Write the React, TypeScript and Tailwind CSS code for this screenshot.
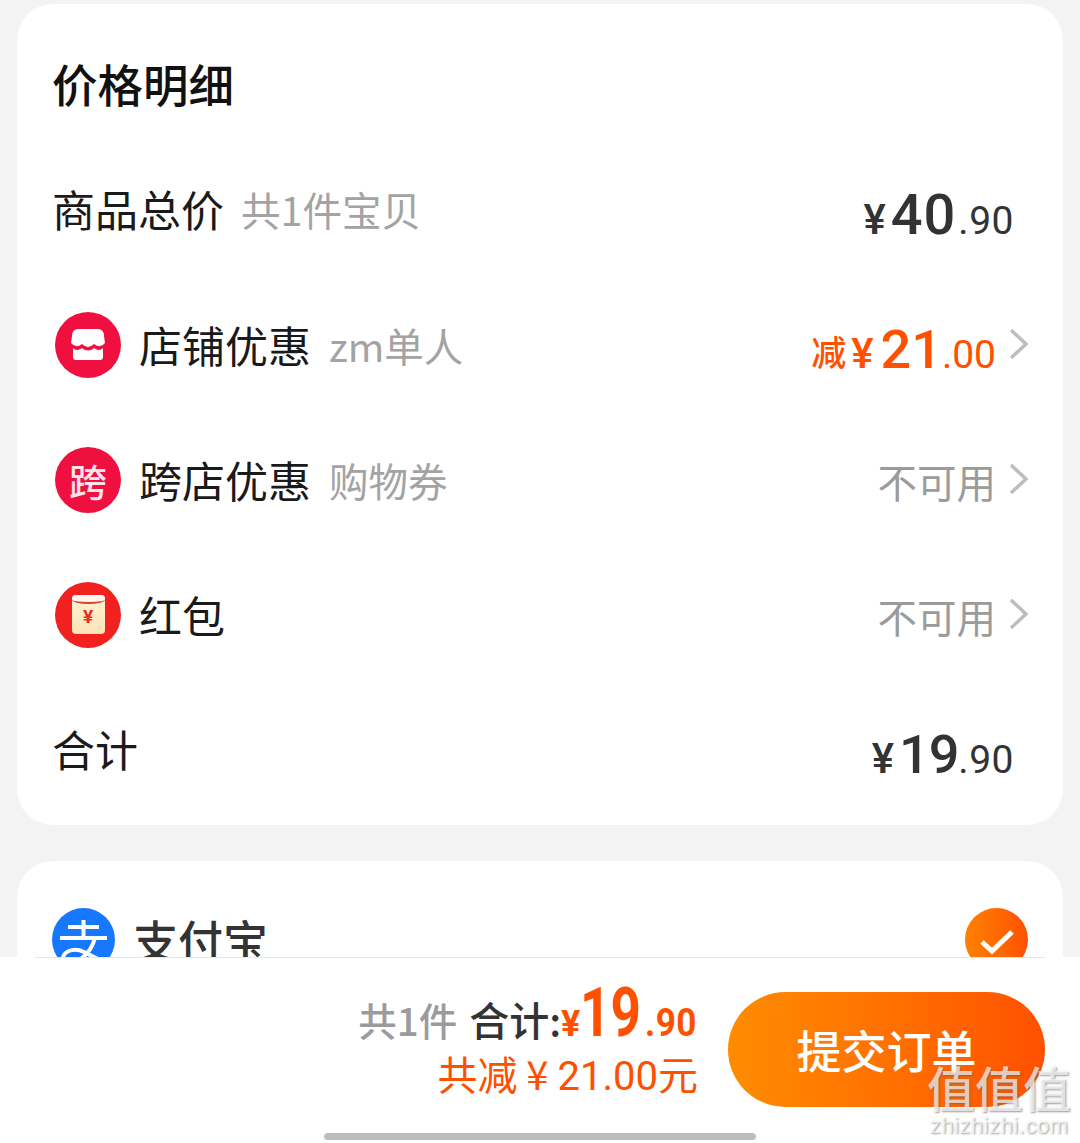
const cjk = "font-['Noto_Sans_CJK_SC','Noto_Sans',sans-serif]";

function Chevron() {
  return (
    <svg className="ml-[13px] -mt-[1px]" width="19" height="32" viewBox="0 0 19 32" fill="none" stroke="#bdbdbd" strokeWidth="3.5">
      <path d="M2 2l15 14L2 30" />
    </svg>
  );
}

function Price({ yuan, cents, yuanClass }: { yuan: string; cents: string; yuanClass: string }) {
  return (
    <div className="mt-[12px] flex items-baseline font-['Roboto',sans-serif] text-[#333333]">
      <span className="mr-[5px] text-[42px] font-medium leading-none">¥</span>
      <span className={`font-medium leading-none ${yuanClass}`}>{yuan}</span>
      <span className="text-[39px] leading-none tracking-[0.5px]">.{cents}</span>
    </div>
  );
}

function Unavailable() {
  return (
    <div className="flex items-center">
      <span className="mt-[2px] text-[39.5px] leading-none text-[#9b9b9b]">不可用</span>
      <Chevron />
    </div>
  );
}

function Row({ icon, label, note, right }: { icon: React.ReactNode; label: string; note: string; right: React.ReactNode }) {
  return (
    <div className="flex h-[135px] items-center justify-between pl-[38px] pr-[35px]">
      <div className="flex items-center">
        {icon}
        <span className="ml-[18px] text-[43px] leading-none text-[#1a1a1a]">{label}</span>
        {note && <span className="ml-[18px] text-[39.5px] leading-none text-[#a3a3a3]">{note}</span>}
      </div>
      {right}
    </div>
  );
}

function ShopIcon() {
  return (
    <div className="flex h-[66px] w-[66px] items-center justify-center rounded-full bg-[#f0103f]">
      <svg width="34" height="31" viewBox="0 0 34 31" fill="#fff">
        <path d="M7 0H27C31 0 33 3 33 7L34 14Q29.5 20 23 15Q17 21 11 15Q5 20 0 14L1 7C1 3 3 0 7 0Z" />
        <path d="M2 19Q6 23 11 19Q17 24 23 19Q28 23 32 19V28a3 3 0 0 1-3 3H5a3 3 0 0 1-3-3Z" />
      </svg>
    </div>
  );
}

function RedPacketIcon() {
  return (
    <div className="flex h-[66px] w-[66px] items-center justify-center rounded-full bg-[#f0211f]">
      <div className="flex h-[39px] w-[33px] flex-col items-center overflow-hidden rounded-[4px] bg-gradient-to-b from-[#fff3d6] to-[#fbe3b4]">
        <div className="h-[9px] w-full rounded-b-[50%] border-b-2 border-[#e2402c] bg-[#fff7f0]" />
        <span className="mt-[3px] font-['Roboto',sans-serif] text-[19px] font-bold leading-none text-[#ee2b22]">¥</span>
      </div>
    </div>
  );
}

export default function App() {
  return (
    <div className={`relative flex h-[1143px] w-[1080px] flex-col overflow-hidden bg-[#f3f3f3] ${cjk}`}>
      <div className="h-[957px] shrink-0 overflow-hidden px-[17px] pt-[4px]">
        {/* price card */}
        <div className="h-[821px] rounded-[36px] bg-white">
          <div className="flex h-[138px] items-center pl-[35px] pt-[22px]">
            <h2 className="text-[45.5px] font-medium leading-none text-[#111111]">价格明细</h2>
          </div>
          <div className="mb-[2px] flex h-[133px] items-center justify-between pl-[35px] pr-[49px]">
            <div className="flex items-center">
              <span className="text-[43px] leading-none text-[#1a1a1a]">商品总价</span>
              <span className="ml-[17px] text-[39.5px] leading-none text-[#a3a3a3]">共1件宝贝</span>
            </div>
            <Price yuan="40" cents="90" yuanClass="mr-[2px] text-[56px] tracking-[1px]" />
          </div>
          <Row
            icon={<ShopIcon />}
            label="店铺优惠"
            note="zm单人"
            right={
              <div className="flex items-center">
                <div className="mt-[10px] flex items-baseline font-['Roboto',sans-serif] text-[#ff5000]">
                  <span className={`-translate-y-[2px] text-[35px] font-medium leading-none ${cjk}`}>减</span>
                  <span className="ml-[5px] mr-[7px] text-[42px] font-medium leading-none">¥</span>
                  <span className="text-[54px] font-medium leading-none">21</span>
                  <span className="text-[39px] leading-none">.00</span>
                </div>
                <Chevron />
              </div>
            }
          />
          <Row
            icon={
              <div className="flex h-[66px] w-[66px] items-center justify-center rounded-full bg-[#f0103f] text-[38px] font-medium leading-none text-[#ffe3ea]">
                跨
              </div>
            }
            label="跨店优惠"
            note="购物券"
            right={<Unavailable />}
          />
          <Row icon={<RedPacketIcon />} label="红包" note="" right={<Unavailable />} />
          <div className="flex h-[133px] items-center justify-between pl-[35px] pr-[49px]">
            <span className="text-[43px] leading-none text-[#1a1a1a]">合计</span>
            <Price yuan="19" cents="90" yuanClass="text-[54px] tracking-[-1px]" />
          </div>
        </div>

        {/* payment card, cut off by the bar below */}
        <div className="mt-[36px] flex h-[160px] items-start justify-between rounded-[36px] bg-white px-[35px] pt-[47px]">
          <div className="flex items-center">
            <div className="h-[63px] w-[63px] rounded-full bg-[#1677ff]">
              <svg width="63" height="63" viewBox="0 0 63 63" fill="none" stroke="#fff" strokeWidth="4">
                <path d="M16 19h31M31.5 12v18M8 30h47" />
                <path d="M43 30c-4 14-14 24-25 24-6 0-8-4-6-7 3-5 12-7 20-3l22 11" />
              </svg>
            </div>
            <span className="ml-[18px] text-[45px] font-medium leading-[63px] text-[#333333]">支付宝</span>
          </div>
          <div className="flex h-[63px] w-[63px] items-center justify-center rounded-full bg-gradient-to-r from-[#ff8000] to-[#ff5000]">
            <svg className="mt-[4px]" width="34" height="26" viewBox="0 0 34 26" fill="none" stroke="#fff" strokeWidth="5">
              <path d="M2 13l10 9L32 3" />
            </svg>
          </div>
        </div>
      </div>

      {/* bottom bar */}
      <div className="relative flex flex-1 flex-col bg-white">
        <div className="mx-[35px] h-px bg-[#e6e6e6]" />
        <div className="flex items-start justify-end px-[35px] pt-[21px]">
          <div className="flex flex-col items-end">
            <div className="flex h-[60px] items-baseline">
              <span className="text-[38.5px] font-medium leading-none text-[#9b9b9b]">共1件</span>
              <span className="ml-[12px] text-[40px] font-medium leading-none text-[#333333]">合计:</span>
              <span className="font-['Roboto',sans-serif] text-[36px] font-bold leading-none text-[#ff5000]">¥</span>
              <span className="mr-[-18px] inline-block origin-left scale-x-[0.78] font-['Roboto',sans-serif] text-[68px] font-bold leading-none text-[#ff5000]">19</span>
              <span className="ml-[5px] mr-[-5px] inline-block origin-left scale-x-[0.9] font-['Roboto',sans-serif] text-[39px] font-bold leading-none tracking-[0.5px] text-[#ff5000]">.90</span>
            </div>
            <div className="mt-[10px] text-[40px] leading-[48px] text-[#ff5000]">
              共减 ¥ <span className="font-['Roboto',sans-serif]">21.00</span>元
            </div>
          </div>
          <button className="ml-[30px] mt-[13px] flex h-[115px] w-[317px] items-center justify-center rounded-full bg-gradient-to-r from-[#ff8c00] to-[#ff5000] text-[45px] font-medium leading-none text-white">
            提交订单
          </button>
        </div>
        <div className="mb-[3px] mt-auto h-[7px] w-[432px] self-center rounded-full bg-[#bdbdbd]" />

        {/* site watermark */}
        <div className="absolute bottom-[4px] right-[9px] flex flex-col items-center text-white/70 [text-shadow:1px_1px_2px_rgba(90,90,90,0.6)]">
          <span className="text-[48px] font-medium leading-[54px]">值值值</span>
          <span className="font-['Liberation_Sans',sans-serif] text-[22px] leading-[26px] tracking-[0.5px]">zhizhizhi.com</span>
        </div>
      </div>
    </div>
  );
}
